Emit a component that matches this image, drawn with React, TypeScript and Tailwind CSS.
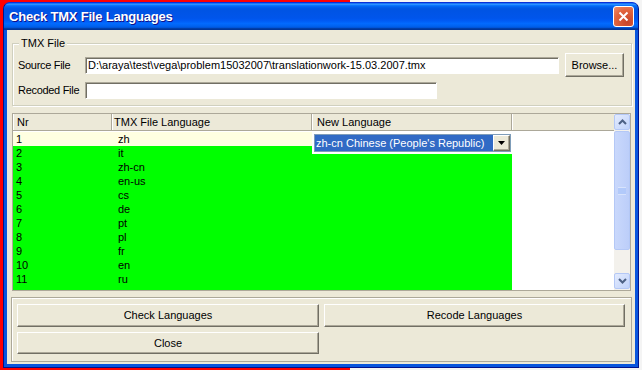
import React from "react";

const rows: [string, string][] = [
  ["1", "zh"],
  ["2", "it"],
  ["3", "zh-cn"],
  ["4", "en-us"],
  ["5", "cs"],
  ["6", "de"],
  ["7", "pt"],
  ["8", "pl"],
  ["9", "fr"],
  ["10", "en"],
  ["11", "ru"],
  ["", ""],
];

const raised =
  "border-t border-l border-t-white border-l-white border-b border-r border-b-[#716F64] border-r-[#716F64] shadow-[inset_-1px_-1px_0_#ACA899] bg-[#ECE9D8]";

const sunken =
  "border-t border-l border-t-[#ACA899] border-l-[#ACA899] border-b border-r border-b-white border-r-white shadow-[inset_1px_1px_0_#716F64] bg-white";

const XpButton = ({ label, className }: { label: string; className: string }) => (
  <button className={`${raised} ${className} flex items-center justify-center text-[11px] text-black`}>
    {label}
  </button>
);

const Arrow = ({ down }: { down?: boolean }) => (
  <svg width="9" height="6" viewBox="0 0 9 6">
    <path
      d={down ? "M1 1 L4.5 4.5 L8 1" : "M1 5 L4.5 1.5 L8 5"}
      fill="none"
      stroke="#4D6185"
      strokeWidth="2"
    />
  </svg>
);

const ScrollButton = ({ down }: { down?: boolean }) => (
  <div className="h-[16px] rounded-[2px] border border-[#B4C8F6] bg-[linear-gradient(135deg,#E3EBFD,#C1D3FB)] flex items-center justify-center">
    <Arrow down={down} />
  </div>
);

export default function App() {
  return (
    <div className="w-[642px] h-[370px] overflow-hidden bg-[linear-gradient(to_right,#FF0000_0,#FF0000_350px,#F4F4F4_350px)] pt-[2px] pl-[3px] font-['Liberation_Sans',Arial,sans-serif]">
      <div className="w-[636px] h-[366px] rounded-t-[7px] bg-[#0855DD] border border-[#00138C] border-t-[#0831D9] flex flex-col">
        {/* title bar */}
        <div className="h-[27px] rounded-t-[6px] flex items-center justify-between pl-[5px] pr-[4px] bg-[linear-gradient(to_bottom,#0058ee_0%,#3593ff_4%,#288eff_6%,#127dff_8%,#036ffc_10%,#0262ee_14%,#0057e5_20%,#0054e3_24%,#0055eb_56%,#005bf5_66%,#026afe_76%,#0062ef_86%,#0052d6_92%,#0040ab_94%,#003092_100%)]">
          <span className="text-white font-bold text-[13px] tracking-[-0.2px] [text-shadow:1px_1px_0_#0F1089] pt-[1px]">
            Check TMX File Languages
          </span>
          <div className="w-[21px] h-[21px] rounded-[3px] border border-white bg-[radial-gradient(circle_at_70%_80%,#C7442A,#E2643D_60%,#F08D6C)] flex items-center justify-center">
            <svg width="11" height="11" viewBox="0 0 11 11">
              <path d="M1.5 1.5 L9.5 9.5 M9.5 1.5 L1.5 9.5" stroke="#fff" strokeWidth="2" />
            </svg>
          </div>
        </div>

        {/* body */}
        <div className="flex-1 mx-[3px] mb-[3px] bg-[#ECE9D8] flex flex-col text-[11px] text-black">
          {/* TMX File group */}
          <div className="relative mt-[13px] ml-[5px] mr-[3px] h-[63px] border border-[#D0D0BF] shadow-[inset_1px_1px_0_#fff,1px_1px_0_#fff] pl-[5px] pt-[9px] flex flex-col gap-[5px]">
            <span className="absolute -top-[8px] left-[6px] px-[2px] bg-[#ECE9D8] leading-[14px]">TMX File</span>
            <div className="flex items-center h-[24px]">
              <span className="w-[67px] tracking-[-0.3px]">Source File</span>
              <div className={`${sunken} w-[474px] h-[17px] flex items-center pl-[2px] leading-[13px]`}>
                D:\araya\test\vega\problem15032007\translationwork-15.03.2007.tmx
              </div>
              <XpButton label="Browse..." className="ml-[6px] w-[59px] h-[24px]" />
            </div>
            <div className="flex items-center h-[17px]">
              <span className="w-[67px] tracking-[-0.3px]">Recoded File</span>
              <div className={`${sunken} w-[352px] h-[17px]`} />
            </div>
          </div>

          {/* table */}
          <div className="mt-[7px] ml-[5px] mr-[4px] h-[178px] border border-[#ACA899] bg-white flex">
            <div className="flex-1 flex flex-col overflow-hidden">
              <div className="h-[17px] flex bg-[#ECE9D8] border-b border-[#ACA899]">
                <div className="w-[99px] pl-[4px] border-r border-[#ACA899] shadow-[inset_1px_0_0_#fff] flex items-center">Nr</div>
                <div className="w-[200px] pl-[2px] border-r border-[#ACA899] shadow-[inset_1px_0_0_#fff] flex items-center">TMX File Language</div>
                <div className="w-[200px] pl-[5px] border-r border-[#ACA899] shadow-[inset_1px_0_0_#fff] flex items-center">New Language</div>
                <div className="flex-1 shadow-[inset_1px_0_0_#fff]" />
              </div>
              <div className="relative flex-1 pt-[1px] overflow-hidden">
                {rows.map(([nr, lang], i) => (
                  <div key={i} className="h-[14px] flex leading-[14px]">
                    <div className={`w-[99px] pl-[3px] ${i === 0 ? "bg-[#FFFFE1]" : "bg-[#00FF00]"}`}>{nr}</div>
                    <div className={`w-[200px] pl-[6px] ${i === 0 ? "bg-[#FFFFE1]" : "bg-[#00FF00]"}`}>{lang}</div>
                    <div className={`w-[200px] ${i === 0 ? "bg-white" : "bg-[#00FF00]"}`} />
                    <div className="flex-1 bg-white" />
                  </div>
                ))}
                {/* in-place editor */}
                <div className="absolute left-[299px] top-0 w-[200px] h-[23px] bg-white pl-[2px] pt-[3px]">
                  <div className="w-[197px] h-[18px] border border-[#7F9DB9] flex bg-white">
                    <div className="flex-1 bg-[#316AC5] text-white pl-[1px] leading-[16px]">zh-cn Chinese (People's Republic)</div>
                    <div className={`${raised} w-[17px] flex items-center justify-center`}>
                      <svg width="7" height="4" viewBox="0 0 7 4">
                        <path d="M0 0 H7 L3.5 4 Z" fill="#000" />
                      </svg>
                    </div>
                  </div>
                </div>
              </div>
            </div>
            {/* scrollbar */}
            <div className="w-[16px] bg-[#F3F1EC] flex flex-col">
              <ScrollButton />
              <div className="h-[119px] mt-[1px] rounded-[2px] border border-[#B4C8F6] bg-[linear-gradient(to_right,#C9D8FC,#BCCEF9)] flex items-center justify-center">
                <svg width="8" height="8" viewBox="0 0 8 8">
                  <path d="M0 1 H8 M0 3 H8 M0 5 H8 M0 7 H8" stroke="#EEF4FE" strokeWidth="1" />
                  <path d="M0 2 H8 M0 4 H8 M0 6 H8" stroke="#8CB0F8" strokeWidth="1" />
                </svg>
              </div>
              <div className="flex-1" />
              <div className="mb-[1px]">
                <ScrollButton down />
              </div>
            </div>
          </div>

          {/* button panel */}
          <div className="mt-[6px] ml-[4px] mr-[3px] h-[65px] border border-[#ACA899] shadow-[inset_1px_1px_0_#fff] pl-[5px] pt-[6px] flex flex-col gap-[5px]">
            <div className="flex gap-[5px]">
              <XpButton label="Check Languages" className="w-[302px] h-[23px]" />
              <XpButton label="Recode Languages" className="w-[301px] h-[23px]" />
            </div>
            <XpButton label="Close" className="w-[302px] h-[22px]" />
          </div>
        </div>
      </div>
    </div>
  );
}
